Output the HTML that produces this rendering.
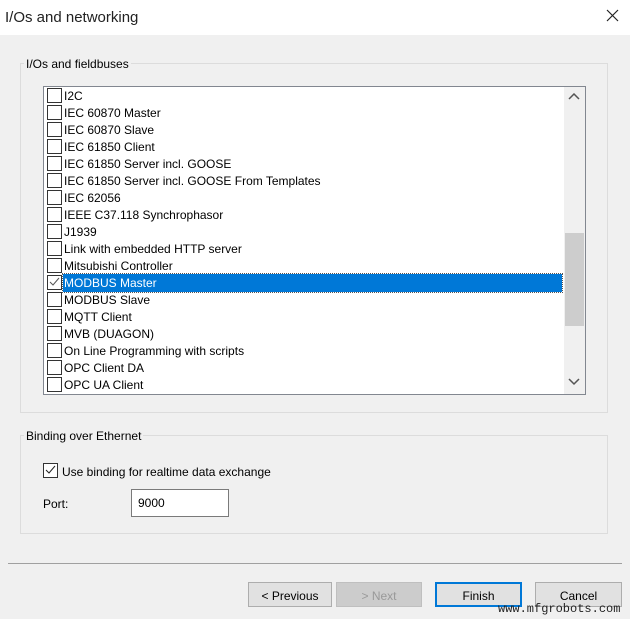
<!DOCTYPE html><html><head><style>
body{margin:0;width:630px;height:619px;background:#f0f0f0;font-family:"Liberation Sans",sans-serif;font-size:12px;color:#000;position:relative;overflow:hidden}
.a{position:absolute}
.title{left:0;top:0;width:630px;height:35px;background:#fff}
.gb{border:1px solid #dcdcdc}
.lg{background:#f0f0f0;padding:0 2px}
.list{left:43px;top:86px;width:541px;height:307px;background:#fff;border:1px solid #828790;overflow:hidden}
.row{position:absolute;left:0;height:17px;line-height:18px;width:520px}
.cb{position:absolute;left:3px;top:1px;width:13px;height:13px;border:1px solid #333;background:#fff}
.row span{position:absolute;left:20px}
.sel span{background:#0078d7;color:#fff;width:498px;padding-left:1px;left:19px;outline:1px dotted #555}
.btn{top:582px;height:23px;border:1px solid #adadad;background:#e1e1e1;text-align:center;line-height:26px}
</style></head><body>
<div class="a title"></div>
<div class="a" style="left:5px;top:9px;font-size:15px;color:#222">I/Os and networking</div>
<svg class="a" style="left:606px;top:9px" width="13" height="13"><path d="M1 1L12 12M12 1L1 12" stroke="#222" stroke-width="1.2"/></svg>
<div class="a gb" style="left:20px;top:63px;width:586px;height:348px"></div>
<div class="a lg" style="left:24px;top:57px">I/Os and fieldbuses</div>
<div class="a list">
<div class="row" style="top:0"><div class="cb"></div><span>I2C</span></div>
<div class="row" style="top:17px"><div class="cb"></div><span>IEC 60870 Master</span></div>
<div class="row" style="top:34px"><div class="cb"></div><span>IEC 60870 Slave</span></div>
<div class="row" style="top:51px"><div class="cb"></div><span>IEC 61850 Client</span></div>
<div class="row" style="top:68px"><div class="cb"></div><span>IEC 61850 Server incl. GOOSE</span></div>
<div class="row" style="top:85px"><div class="cb"></div><span>IEC 61850 Server incl. GOOSE From Templates</span></div>
<div class="row" style="top:102px"><div class="cb"></div><span>IEC 62056</span></div>
<div class="row" style="top:119px"><div class="cb"></div><span>IEEE C37.118 Synchrophasor</span></div>
<div class="row" style="top:136px"><div class="cb"></div><span>J1939</span></div>
<div class="row" style="top:153px"><div class="cb"></div><span>Link with embedded HTTP server</span></div>
<div class="row" style="top:170px"><div class="cb"></div><span>Mitsubishi Controller</span></div>
<div class="row sel" style="top:187px"><div class="cb"><svg width="13" height="13" style="position:absolute;left:0;top:0"><path d="M2 6L5 9L11 2" stroke="#555" fill="none"/></svg></div><span>MODBUS Master</span></div>
<div class="row" style="top:204px"><div class="cb"></div><span>MODBUS Slave</span></div>
<div class="row" style="top:221px"><div class="cb"></div><span>MQTT Client</span></div>
<div class="row" style="top:238px"><div class="cb"></div><span>MVB (DUAGON)</span></div>
<div class="row" style="top:255px"><div class="cb"></div><span>On Line Programming with scripts</span></div>
<div class="row" style="top:272px"><div class="cb"></div><span>OPC Client DA</span></div>
<div class="row" style="top:289px"><div class="cb"></div><span>OPC UA Client</span></div>
<div class="a" style="left:520px;top:0;width:21px;height:307px;background:#f0f0f0"></div>
<div class="a" style="left:521px;top:146px;width:19px;height:93px;background:#cdcdcd"></div>
<svg class="a" style="left:524px;top:6px" width="12" height="8"><path d="M1 6L6 1L11 6" stroke="#555" fill="none" stroke-width="1.5"/></svg>
<svg class="a" style="left:524px;top:291px" width="12" height="8"><path d="M1 1L6 6L11 1" stroke="#555" fill="none" stroke-width="1.5"/></svg>
</div>
<div class="a gb" style="left:20px;top:435px;width:586px;height:97px"></div>
<div class="a lg" style="left:24px;top:429px">Binding over Ethernet</div>
<div class="a" style="left:43px;top:463px;width:13px;height:13px;border:1px solid #333;background:#fff"><svg width="13" height="13"><path d="M2 6L5 9L11 2" stroke="#222" fill="none"/></svg></div>
<div class="a" style="left:62px;top:465px">Use binding for realtime data exchange</div>
<div class="a" style="left:43px;top:497px">Port:</div>
<div class="a" style="left:131px;top:489px;width:96px;height:26px;border:1px solid #7a7a7a;background:#fff;line-height:26px;text-indent:6px">9000</div>
<div class="a" style="left:8px;top:563px;width:614px;height:1px;background:#a0a0a0"></div>
<div class="a btn" style="left:248px;width:82px">&lt; Previous</div>
<div class="a btn" style="left:336px;width:84px;color:#999;background:#ccc;border-color:#bfbfbf">&gt; Next</div>
<div class="a btn" style="left:435px;width:83px;border:2px solid #0078d7;height:21px;line-height:24px">Finish</div>
<div class="a btn" style="left:535px;width:85px">Cancel</div>
<div class="a" style="left:498px;top:602px;font-family:'Liberation Mono',monospace;font-size:12px;color:#222">www.mfgrobots.com</div>
</body></html>
